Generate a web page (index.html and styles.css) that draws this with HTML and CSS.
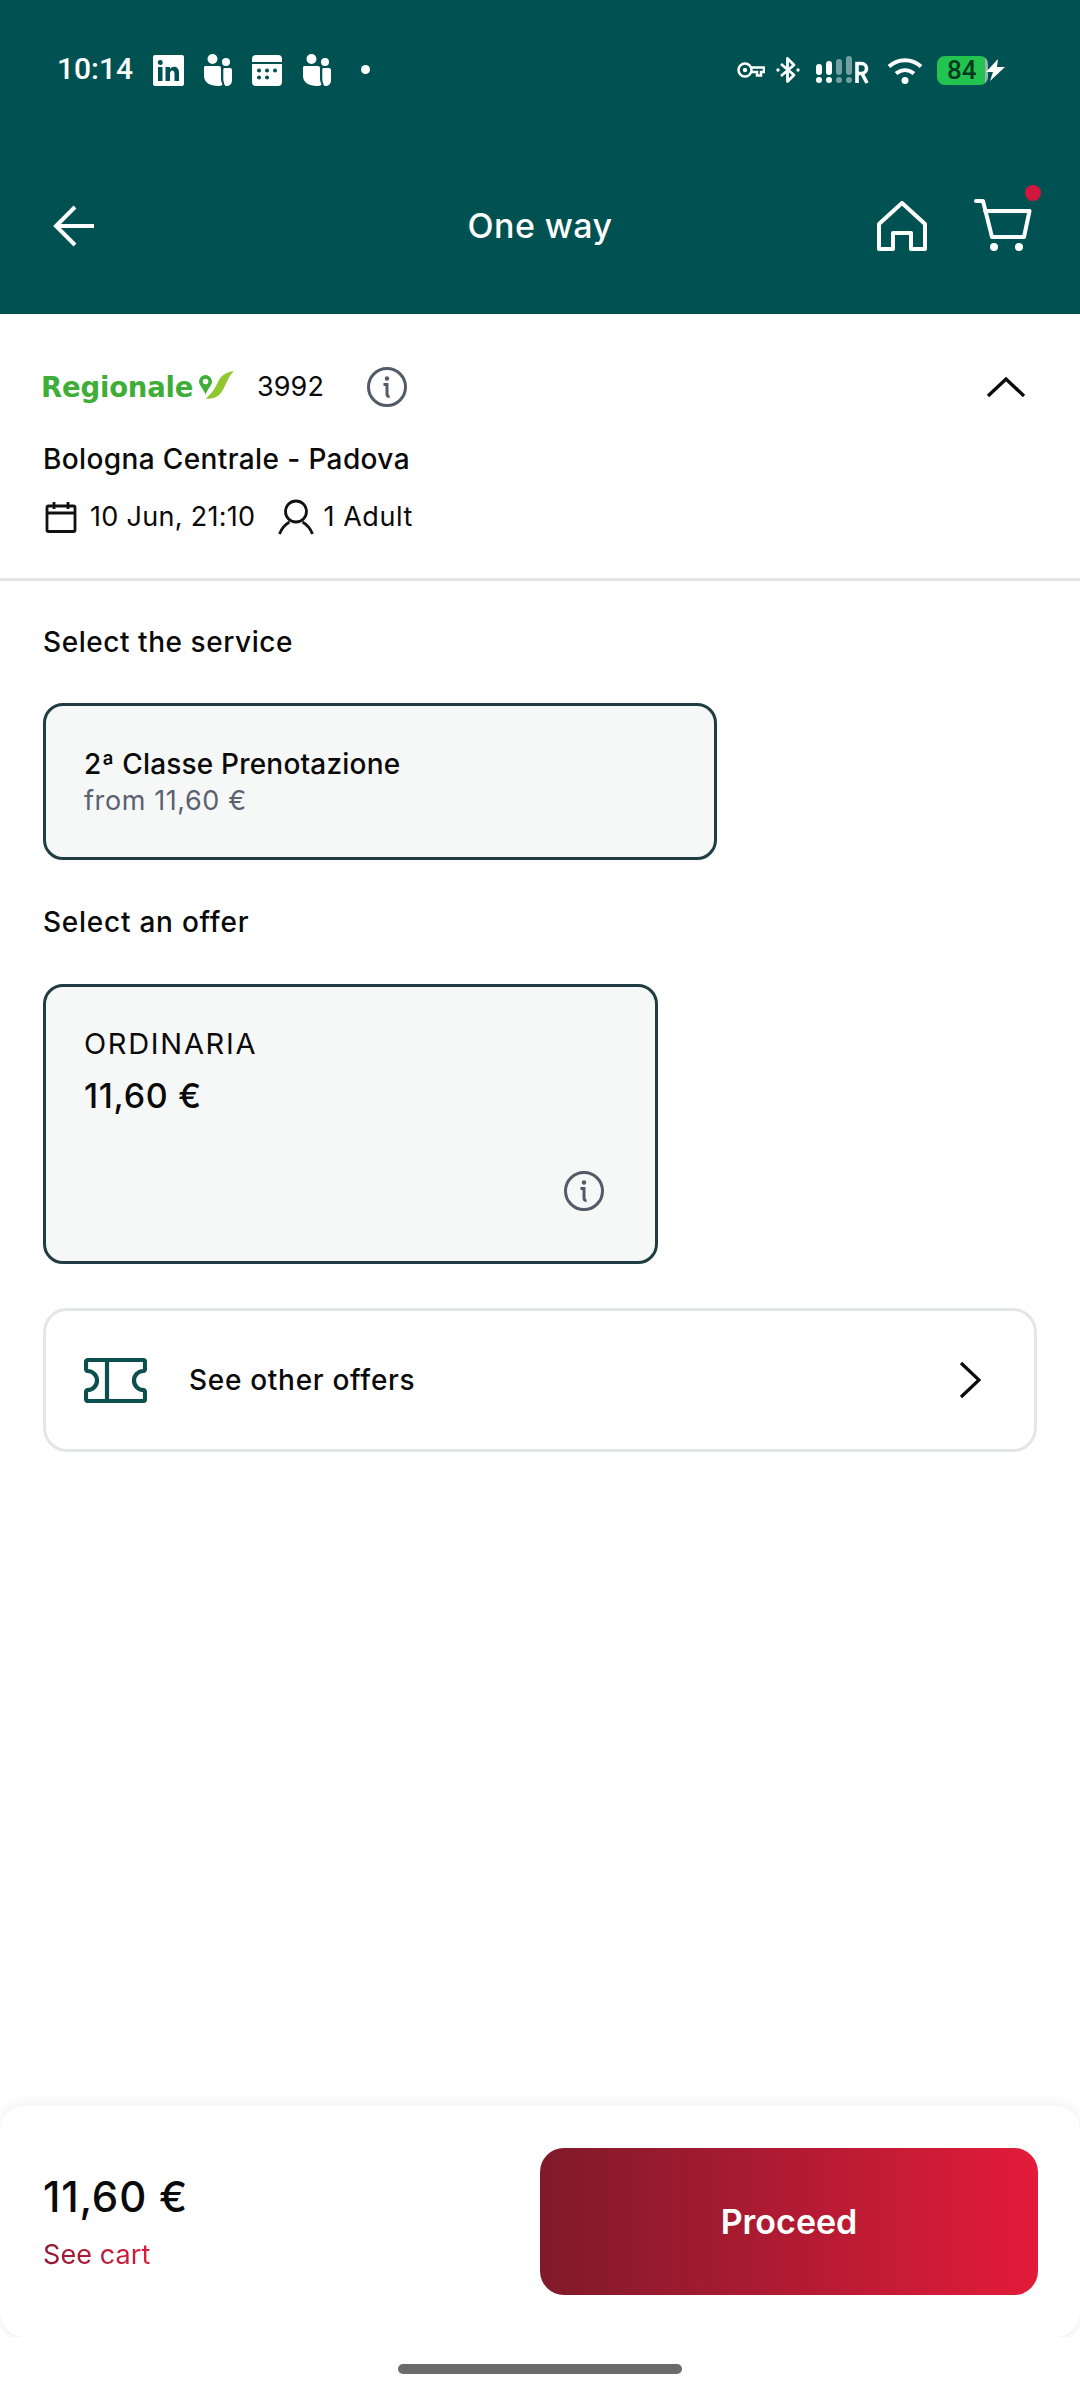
FILE: index.html
```html
<!DOCTYPE html>
<html lang="en">
<head>
<meta charset="utf-8">
<title>One way</title>
<link rel="stylesheet" href="styles.css">
</head>
<body>
<div class="page">
  <header class="header">
    <div class="status">
      <div class="status-left">
        <span class="time">10:14</span>
        <svg class="ic ic-li" width="31" height="31" viewBox="0 0 31 31"><path fill="#fff" fill-rule="evenodd" d="M2 0h27a2 2 0 0 1 2 2v27a2 2 0 0 1-2 2H2a2 2 0 0 1-2-2V2a2 2 0 0 1 2-2zM5 12v14h4.500V12zM7.200 5A2.500 2.500 0 1 0 7.300 10 2.500 2.500 0 0 0 7.200 5zM12.500 12v14H17v-7.500c0-4 4.500-4 4.500 0V26H26v-8.500c0-6.500-6.500-7.500-9-3.500v-2z"/></svg>
        <svg class="ic ic-teams" width="29" height="32" viewBox="0 0 29 32"><g fill="#fff"><circle cx="9.500" cy="5" r="5"/><circle cx="23" cy="8" r="4"/><path d="M2 12h14a2 2 0 0 1 2 2v10c0 2.500.5 4.500 1.500 6.500-1 1-2.500 1.500-4.500 1.500-8 0-14-3.500-14-10V14a2 2 0 0 1 1-2z"/><path d="M21.500 14H27a2 2 0 0 1 2 2v10c0 3.500-2 6-5 6-.8 0-1.500-.2-2-.6-1.200-2-1.700-4.400-1.700-7.400V15.500a1.500 1.500 0 0 1 1.200-1.500z"/></g></svg>
        <svg class="ic ic-cal" width="30" height="31" viewBox="0 0 30 31"><path fill="#fff" fill-rule="evenodd" d="M4 0h22a4 4 0 0 1 4 4v3H0V4a4 4 0 0 1 4-4zM0 9h30v18a4 4 0 0 1-4 4H4a4 4 0 0 1-4-4zM7 13.500a2 2 0 1 0 .1 4 2 2 0 0 0-.1-4zm8 0a2 2 0 1 0 .1 4 2 2 0 0 0-.1-4zm8 0a2 2 0 1 0 .1 4 2 2 0 0 0-.1-4zM7 20.500a2 2 0 1 0 .1 4 2 2 0 0 0-.1-4zm8 0a2 2 0 1 0 .1 4 2 2 0 0 0-.1-4z"/></svg>
        <svg class="ic ic-teams2" width="29" height="32" viewBox="0 0 29 32"><g fill="#fff"><circle cx="9.500" cy="5" r="5"/><circle cx="23" cy="8" r="4"/><path d="M2 12h14a2 2 0 0 1 2 2v10c0 2.500.5 4.500 1.500 6.500-1 1-2.500 1.500-4.500 1.500-8 0-14-3.500-14-10V14a2 2 0 0 1 1-2z"/><path d="M21.500 14H27a2 2 0 0 1 2 2v10c0 3.500-2 6-5 6-.8 0-1.500-.2-2-.6-1.200-2-1.700-4.400-1.700-7.400V15.500a1.500 1.500 0 0 1 1.200-1.500z"/></g></svg>
        <span class="dot"></span>
      </div>
      <div class="status-right">
        <svg class="ic-key" width="28" height="16" viewBox="0 0 28 16"><g fill="none" stroke="#fff" stroke-width="2.500"><circle cx="8" cy="8" r="6.500"/><path d="M14.500 5.500H27V10h-3v3.500h-4V10h-5.500"/></g><circle cx="8" cy="8" r="2.200" fill="#fff"/></svg>
        <svg class="ic-bt" width="24" height="28" viewBox="0 0 24 28"><g fill="none" stroke="#fff" stroke-width="2.800" stroke-linejoin="round"><path d="M5 8l13 11-6.500 6.500v-23L18 9 5 20"/></g><circle cx="2" cy="14" r="1.700" fill="#fff"/><circle cx="22" cy="14" r="1.700" fill="#fff"/></svg>
        <svg class="ic-sig" width="54" height="28" viewBox="0 0 54 28"><g fill="#fff"><rect x="0" y="8" width="6" height="11" rx="3"/><circle cx="3" cy="24" r="3"/><rect x="10" y="5" width="6" height="14" rx="3"/><circle cx="13" cy="24" r="3"/></g><g fill="#fff" opacity=".45"><rect x="20" y="3" width="6" height="16" rx="3"/><circle cx="23" cy="24" r="3"/><rect x="30" y="0" width="6" height="19" rx="3"/><circle cx="33" cy="24" r="3"/></g><path fill="none" stroke="#fff" stroke-width="3.600" d="M41 27V7.500h4.500a4.500 4.500 0 0 1 0 10H41m5 0l5 9.500"/></svg>
        <svg class="ic-wifi" width="36" height="27" viewBox="0 0 36 27"><g fill="none" stroke="#fff" stroke-width="4"><path d="M2 9.500C11 1 25 1 34 9.500"/><path d="M9 16.500c5.500-4.500 12.500-4.500 18 0"/></g><circle cx="18" cy="23.500" r="3.500" fill="#fff"/></svg>
        <div class="battery">
          <span class="batt-body"><span class="batt-num">84</span></span>
          <svg class="ic-bolt" width="19" height="22" viewBox="0 0 19 22"><path fill="#fff" d="M12 0L0 13h7l-3 9L19 8h-8z"/></svg>
        </div>
      </div>
    </div>
    <nav class="nav">
      <svg class="ic-back" width="42" height="42" viewBox="0 0 42 42"><path fill="none" stroke="#fff" stroke-width="4" d="M41 21H4M22 2L3 21l19 19"/></svg>
      <h1 class="title">One way</h1>
      <div class="nav-actions">
        <svg class="ic-home" width="50" height="50" viewBox="0 0 50 50"><path fill="none" stroke="#fff" stroke-width="4" stroke-linejoin="round" d="M2 48V23L25 2l23 21v25H34V32H16v16z"/></svg>
        <div class="cart">
          <svg width="58" height="54" viewBox="0 0 58 54"><g fill="none" stroke="#fff" stroke-width="4" stroke-linejoin="round" stroke-linecap="round"><path d="M2 2h7l9 36h32l5.500-26H11"/></g><circle cx="20" cy="48" r="4" fill="#fff"/><circle cx="45" cy="48" r="4" fill="#fff"/></svg>
          <span class="cart-badge"></span>
        </div>
      </div>
    </nav>
  </header>

  <main class="main">
    <section class="train">
      <div class="train-head">
        <div class="brand">
          <span class="brand-name">Regionale</span>
          <svg class="brand-mark" width="37" height="28" viewBox="0 0 37 28"><path fill="#3fae39" fill-rule="evenodd" d="M6.500 4a6.500 6.500 0 0 1 6.500 6.500c0 3.500-3.500 6-6.500 13C3.500 16.500 0 14 0 10.500A6.500 6.500 0 0 1 6.500 4zm0 3.700a2.800 2.800 0 1 0 .1 5.600 2.800 2.800 0 0 0-.1-5.600z"/><path fill="#8fc72e" d="M35 0c-5 1-10 2.500-13 6-4 5-5 13-15 21.500 6 .8 11.500-1 15-5.500C27 15 28.500 6 35 0z"/></svg>
        </div>
        <span class="train-num">3992</span>
        <svg class="info info-head" width="40" height="40" viewBox="0 0 40 40"><circle cx="20" cy="20" r="18.500" fill="none" stroke="#535a68" stroke-width="3"/><circle cx="20" cy="11.500" r="2.200" fill="#535a68"/><path fill="none" stroke="#535a68" stroke-width="3" d="M16.500 17.500H20V27c0 2 1 2.500 2.500 2"/></svg>
        <svg class="chev-up" width="40" height="22" viewBox="0 0 40 22"><path fill="none" stroke="#0a0a0a" stroke-width="3.400" d="M2 20L20 3l18 17"/></svg>
      </div>
      <div class="route">Bologna Centrale - Padova</div>
      <div class="meta">
        <svg class="meta-cal" width="32" height="32" viewBox="0 0 32 32"><g fill="none" stroke="#111" stroke-width="2.800" stroke-linejoin="round"><rect x="2" y="5" width="28" height="25.500" rx="1.500"/><path d="M2 12h28M9 1v7M23 1v7"/></g></svg>
        <span class="meta-text meta-date">10 Jun, 21:10</span>
        <svg class="meta-user" width="36" height="36" viewBox="0 0 36 36"><g fill="none" stroke="#111" stroke-width="2.800"><circle cx="18" cy="12.500" r="10.500"/><path d="M1.500 35c2.500-6.500 6.500-10 10-12M34.500 35c-2.500-6.500-6.500-10-10-12"/></g></svg>
        <span class="meta-text meta-adult">1 Adult</span>
      </div>
    </section>

    <section class="options">
      <h2 class="label">Select the service</h2>
      <div class="card card-service">
        <div class="card-title">2ª Classe Prenotazione</div>
        <div class="card-sub">from 11,60 €</div>
      </div>
      <h2 class="label label-offer">Select an offer</h2>
      <div class="card card-offer">
        <div class="offer-name">ORDINARIA</div>
        <div class="offer-price">11,60 €</div>
        <svg class="info info-offer" width="40" height="40" viewBox="0 0 40 40"><circle cx="20" cy="20" r="18.500" fill="none" stroke="#535a68" stroke-width="3"/><circle cx="20" cy="11.500" r="2.200" fill="#535a68"/><path fill="none" stroke="#535a68" stroke-width="3" d="M16.500 17.500H20V27c0 2 1 2.500 2.500 2"/></svg>
      </div>
      <div class="other">
        <svg class="ticket" width="63" height="45" viewBox="0 0 63 45"><path fill="none" stroke="#0b4f4f" stroke-width="4.200" stroke-linejoin="round" d="M4 2h55a2 2 0 0 1 2 2v7c0 1-.5 1.500-1.500 2a9.500 9.500 0 0 0 0 19c1 .5 1.500 1 1.500 2v7a2 2 0 0 1-2 2H4a2 2 0 0 1-2-2v-7c0-1 .5-1.500 1.500-2a9.500 9.500 0 0 0 0-19C2.500 12.500 2 12 2 11V4a2 2 0 0 1 2-2zM23 2v41"/></svg>
        <span class="other-text">See other offers</span>
        <svg class="chev-right" width="22" height="38" viewBox="0 0 22 38"><path fill="none" stroke="#0a0a0a" stroke-width="3.200" d="M2 2l18 17L2 36"/></svg>
      </div>
    </section>
  </main>

  <footer class="bar">
    <div class="totals">
      <div class="total">11,60 €</div>
      <div class="cart-link">See cart</div>
    </div>
    <div class="proceed">Proceed</div>
  </footer>
  <div class="gesture"><span class="gesture-pill"></span></div>
</div>
</body>
</html>
```

FILE: styles.css
```css
* { box-sizing: border-box; }
html, body { margin: 0; padding: 0; background: #fff; }
body { font-family: "Inter", "Noto Sans", sans-serif; color: #0a0a0a; }
svg { display: block; flex: none; }

.page { width: 1080px; height: 2400px; display: flex; flex-direction: column; overflow: hidden; }

.header { height: 314px; background: #005151; color: #fff; padding-top: 54px; display: flex; flex-direction: column; }
.status { height: 32px; display: flex; justify-content: space-between; align-items: center; padding: 0 75px 0 57px; }
.status-left, .status-right { display: flex; align-items: center; }
.time { font-family: "Roboto", sans-serif; font-weight: 500; font-size: 30px; line-height: 30px; width: 96px; margin-top: -2px; }
.ic-teams { margin-left: 19px; }
.ic-cal { margin-left: 20px; }
.ic-teams2 { margin-left: 20px; }
.dot { width: 9px; height: 9px; border-radius: 50%; background: #fff; margin-left: 30px; margin-top: -2px; }

.ic-bt { margin-left: 11px; }
.ic-sig { margin-left: 16px; }
.ic-wifi { margin-left: 17px; }
.battery { margin-left: 14px; display: flex; align-items: center; }
.batt-body { width: 51px; height: 29px; border-radius: 8px; background: linear-gradient(90deg, #22c34f 0 48px, #9db3b3 48px); display: flex; align-items: center; padding-left: 10px; }
.batt-num { font-family: "Roboto", sans-serif; font-size: 26px; font-weight: 500; line-height: 29px; color: #063a20; }
.ic-bolt { margin-left: -2px; }

.nav { margin-top: 113px; height: 54px; padding: 0 48px; display: grid; grid-template-columns: 1fr auto 1fr; align-items: center; }
.ic-back { margin-left: 5px; }
.title { margin: 0; font-size: 34px; line-height: 40px; font-weight: 500; letter-spacing: 0.4px; }
.nav-actions { display: flex; align-items: center; justify-content: flex-end; gap: 47px; }
.cart { position: relative; }
.cart-badge { position: absolute; top: -14px; right: -9px; width: 16px; height: 16px; border-radius: 50%; background: #d2173f; }

.main { flex: 1; min-height: 0; }

.train { padding: 53px 43px 43px; border-bottom: 3px solid #e4e4e4; }
.train-head { height: 40px; display: flex; align-items: center; }
.brand { display: flex; align-items: center; margin-left: -2px; width: 216px; }
.brand-name { font-family: "DejaVu Sans", sans-serif; color: #3fae39; font-weight: 700; font-size: 27.500px; line-height: 34px; letter-spacing: -0.2px; }
.brand-mark { margin-left: 6px; margin-top: -4px; }
.train-num { font-size: 27px; line-height: 36px; width: 110px; letter-spacing: 0.1px; }
.chev-up { margin-left: auto; margin-right: 11px; }

.route { margin-top: 34px; font-size: 28px; line-height: 36px; font-weight: 500; letter-spacing: 0.38px; }
.meta { margin-top: 22px; height: 36px; display: flex; align-items: center; }
.meta-cal { margin-left: 2px; }
.meta-text { font-size: 27px; line-height: 36px; }
.meta-date { margin-left: 13px; letter-spacing: 0.3px; }
.meta-user { margin-left: 23px; margin-right: 9px; }
.meta-adult { letter-spacing: 0.55px; }

.options { padding: 43px 43px 0; }
.label { margin: 0; font-size: 28px; line-height: 36px; font-weight: 500; letter-spacing: 0.55px; }
.label-offer { margin-top: 44px; letter-spacing: 0.75px; }
.card { margin-top: 43px; border: 3px solid #1f3d42; border-radius: 20px; background: #f6f8f8; }
.card-service { width: 674px; height: 157px; padding: 40px 38px 0; }
.card-title { font-size: 28px; line-height: 36px; font-weight: 500; letter-spacing: 0.19px; }
.card-sub { margin-top: 1px; font-size: 27px; line-height: 36px; color: #5a6170; letter-spacing: 0.6px; }
.card-offer { margin-top: 44px; width: 615px; height: 280px; padding: 39px 51px 50px 38px; display: flex; flex-direction: column; }
.offer-name { font-size: 29px; line-height: 36px; letter-spacing: 1.700px; }
.offer-price { margin-top: 12px; font-size: 34px; line-height: 44px; font-weight: 500; letter-spacing: 0.7px; }
.info-offer { margin-top: auto; align-self: flex-end; }

.other { margin-top: 44px; width: 994px; height: 144px; border: 3px solid #e4e5e9; border-radius: 24px; display: flex; align-items: center; padding: 0 53px 0 38px; }
.other-text { margin-left: 42px; font-size: 28px; line-height: 36px; font-weight: 500; letter-spacing: 0.7px; }
.chev-right { margin-left: auto; }

.bar { height: 231px; border-radius: 24px; background: #fff; box-shadow: 0 -4px 14px rgba(0,0,0,.05), 0 2px 4px rgba(0,0,0,.06); display: flex; align-items: center; justify-content: space-between; padding: 0 42px 0 43px; }
.total { font-size: 42px; line-height: 52px; font-weight: 500; letter-spacing: 0.8px; }
.cart-link { margin-top: 14px; font-size: 27px; line-height: 36px; letter-spacing: 0.1px; background: linear-gradient(90deg, #8f1a30, #dc1b3c); -webkit-background-clip: text; background-clip: text; color: transparent; width: max-content; }
.proceed { width: 498px; height: 147px; border-radius: 24px; background: linear-gradient(90deg, #7f1a2a, #e31b3a); color: #fff; font-size: 34px; font-weight: 600; display: flex; align-items: center; justify-content: center; }

.gesture { flex: none; height: 63px; padding-top: 27px; display: flex; justify-content: center; background: #fff; }
.gesture-pill { width: 284px; height: 10px; border-radius: 5px; background: #6b6b6b; }
```
